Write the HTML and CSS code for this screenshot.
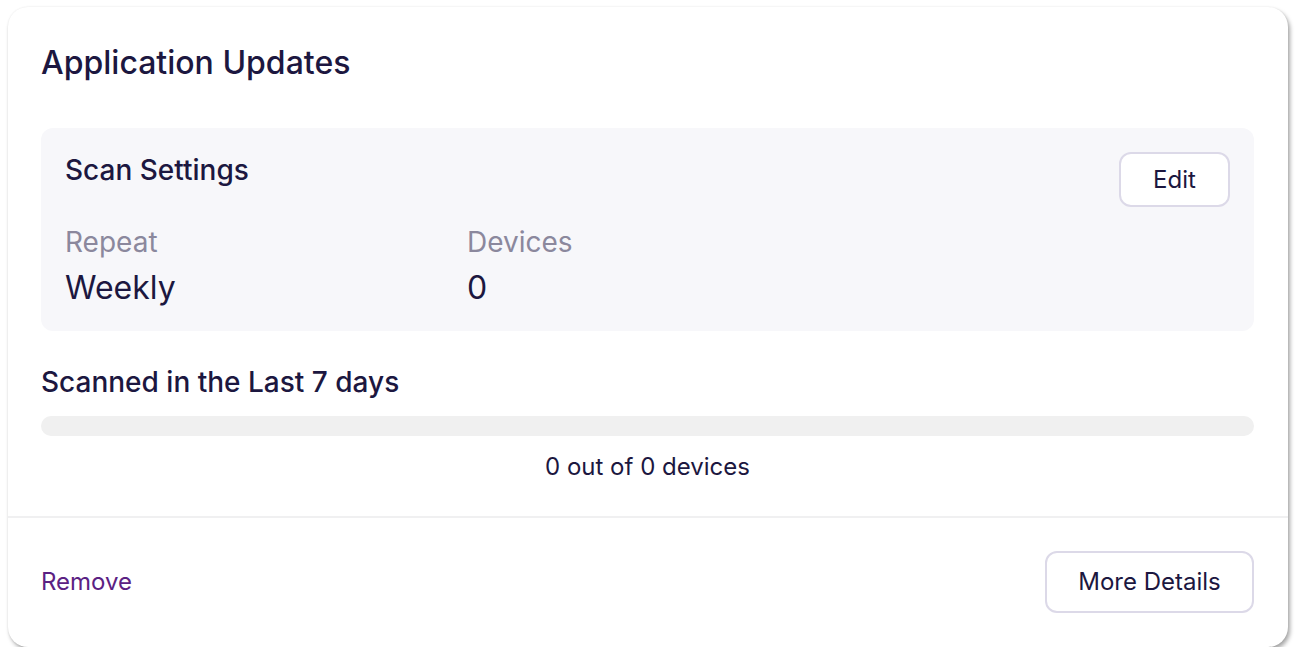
FILE: index.html
```html
<!DOCTYPE html>
<html lang="en">
<head>
<meta charset="utf-8">
<title>Application Updates</title>
<link rel="stylesheet" href="styles.css">
</head>
<body>
<div class="card">
  <div class="card-body">
    <h2 class="card-title">Application Updates</h2>
    <div class="settings">
      <div class="settings-head">
        <h3 class="settings-title">Scan Settings</h3>
        <button class="btn btn-edit" type="button">Edit</button>
      </div>
      <div class="settings-grid">
        <div class="field">
          <div class="field-label">Repeat</div>
          <div class="field-value">Weekly</div>
        </div>
        <div class="field">
          <div class="field-label">Devices</div>
          <div class="field-value">0</div>
        </div>
      </div>
    </div>
    <h3 class="section-title">Scanned in the Last 7 days</h3>
    <div class="progress"><div class="progress-fill" style="width:0%"></div></div>
    <div class="progress-caption">0 out of 0 devices</div>
  </div>
  <div class="card-footer">
    <a class="link-remove" href="#">Remove</a>
    <button class="btn btn-more" type="button">More Details</button>
  </div>
</div>
</body>
</html>
```

FILE: styles.css
```css
* { box-sizing: border-box; }
html, body { margin: 0; padding: 0; background: #ffffff; }
body {
  font-family: Inter, "Noto Sans", "Liberation Sans", sans-serif;
  color: #1c1740;
}
.card {
  margin: 7px 0 0 8px;
  width: 1280px;
  height: 640px;
  background: #fff;
  border-radius: 20px;
  box-shadow: 2px 3px 4px rgba(0,0,0,0.35), 0 0 2px rgba(0,0,0,0.08);
  display: flex;
  flex-direction: column;
}
.card-body {
  padding: 36px 34px 0 33px;
  border-bottom: 2px solid #f0f0f1;
}
.card-title {
  margin: 0 0 45px;
  font-size: 32px;
  line-height: 40px;
  font-weight: 500;
}
.settings {
  background: #f7f7fa;
  border-radius: 12px;
  padding: 24px 24px 25px 24px;
}
.settings-head {
  display: flex;
  justify-content: space-between;
  align-items: flex-start;
}
.settings-title {
  margin: 0;
  font-size: 28px;
  line-height: 36px;
  font-weight: 500;
}
.btn {
  font-family: inherit;
  color: #1c1740;
  background: #fff;
  border: 2px solid #dcd9e8;
  border-radius: 12px;
  cursor: pointer;
}
.btn-edit {
  width: 111px;
  height: 55px;
  font-size: 24px;
}
.settings-grid {
  display: grid;
  grid-template-columns: 402px 402px;
  margin-top: 19px;
}
.field-label {
  font-size: 28px;
  line-height: 32px;
  color: #8b889d;
}
.field-value {
  margin-top: 12px;
  font-size: 32px;
  line-height: 36px;
}
.section-title {
  margin: 35px 0 0;
  font-size: 28px;
  line-height: 32px;
  font-weight: 500;
}
.progress {
  margin-top: 18px;
  height: 20px;
  background: #f0f0f0;
  border-radius: 10px;
  overflow: hidden;
}
.progress-fill { height: 100%; background: #5b2183; }
.progress-caption {
  margin: 16px 0 34px;
  text-align: center;
  font-size: 24px;
  line-height: 30px;
}
.card-footer {
  flex: 1;
  display: flex;
  justify-content: space-between;
  align-items: center;
  padding: 0 34px 2px 33px;
}
.link-remove {
  color: #5b2183;
  font-size: 24px;
  text-decoration: none;
}
.btn-more {
  width: 209px;
  height: 62px;
  font-size: 24px;
}
```
